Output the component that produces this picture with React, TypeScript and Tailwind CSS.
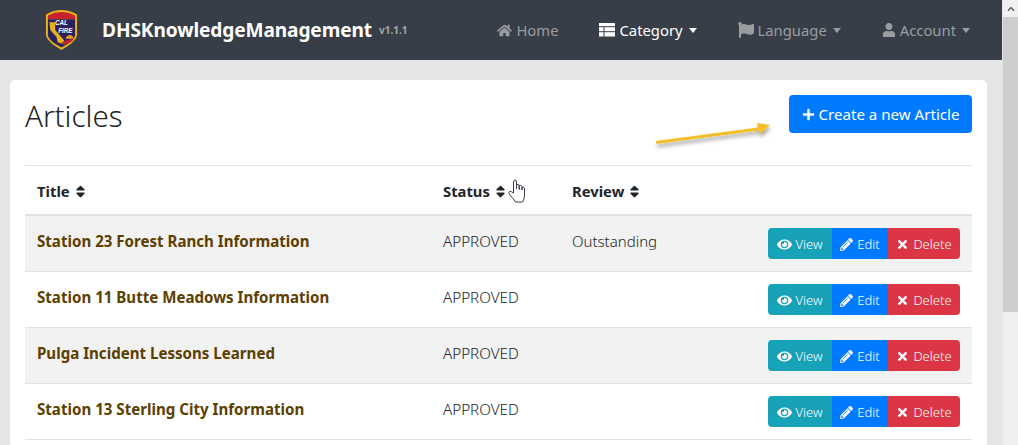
import { FaHome, FaFlag, FaUser, FaPlus, FaEye, FaPencilAlt, FaTimes, FaSort, FaChevronUp } from "react-icons/fa";

const rows = [
  { title: "Station 23 Forest Ranch Information", review: "Outstanding" },
  { title: "Station 11 Butte Meadows Information", review: "" },
  { title: "Pulga Incident Lessons Learned", review: "" },
  { title: "Station 13 Sterling City Information", review: "" },
];

function Logo() {
  return (
    <svg width="33" height="42" viewBox="0 0 34 42" className="shrink-0">
      <path d="M1 5 Q9 0.5 17 0.5 Q25 0.5 33 5 L33 27 Q31 34 17 41.5 Q3 34 1 27 Z" fill="#e8b21c" />
      <path d="M3 6 Q10 2.5 17 2.5 Q24 2.5 31 6 L31 10 L3 10 Z" fill="#c8232c" />
      <path d="M3 10 L31 10 L31 27 Q29 33 17 39 Q5 33 3 27 Z" fill="#2a2260" />
      <text x="17" y="16" fontSize="6.5" fontWeight="700" fontStyle="italic" fill="#fff" textAnchor="middle" fontFamily="Liberation Sans">CAL</text>
      <text x="21" y="24" fontSize="6.5" fontWeight="700" fontStyle="italic" fill="#fff" textAnchor="middle" fontFamily="Liberation Sans">FIRE</text>
      <path d="M4.5 13 L10.5 13 L10.5 21 L20 32 L18.5 35.5 L13 33.5 L12 28.5 L5.5 21 Z" fill="#e8b21c" />
      <path d="M21 30 A4.5 4.5 0 0 1 29 28 L29 30 Z" fill="#e8a01c" />
      <path d="M17 33.5 L29.5 29.5 L28 32.5 L19.5 36.5 Z" fill="#c8232c" />
    </svg>
  );
}

function TableIcon() {
  return (
    <svg width="16" height="14" viewBox="0 0 16 14" className="shrink-0" fill="#fff">
      <rect x="0" y="0" width="16" height="3.2" />
      <rect x="0" y="4.2" width="4.5" height="4" />
      <rect x="5.5" y="4.2" width="10.5" height="4" />
      <rect x="0" y="9.2" width="4.5" height="4.3" />
      <rect x="5.5" y="9.2" width="10.5" height="4.3" />
    </svg>
  );
}

function Caret({ light }: { light: boolean }) {
  return <span className={`ml-[2px] inline-block w-0 h-0 border-x-[4.5px] border-x-transparent border-t-[5px] ${light ? "border-t-white" : "border-t-[#9a9da0]"}`} />;
}

function NavItem({ icon, label, active, caret }: { icon: React.ReactNode; label: string; active?: boolean; caret?: boolean }) {
  return (
    <div className={`flex items-center gap-[4px] text-[14.8px] ${active ? "text-white" : "text-[#9a9da0]"}`}>
      {icon}
      <span>{label}</span>
      {caret && <Caret light={!!active} />}
    </div>
  );
}

function Th({ label, className }: { label: string; className: string }) {
  return (
    <div className={`flex items-center gap-[3px] pl-3 pt-[2px] font-bold text-[#212529] text-[14.8px] ${className}`}>
      <span>{label}</span>
      <FaSort className="text-[15px]" />
    </div>
  );
}

export default function App() {
  return (
    <div className="flex h-[445px] w-[1018px] overflow-hidden bg-[#e3e5e7] text-[#212529] font-['Noto_Sans','Open_Sans',sans-serif]">
      <div className="relative flex-1 min-w-0 flex flex-col">
        <header className="h-[60px] shrink-0 bg-[#383e47] flex items-center">
          <div className="ml-[45px] mr-[24px]"><Logo /></div>
          <span className="text-white font-bold text-[19.1px] tracking-[-0.1px]">DHSKnowledgeManagement</span>
          <span className="ml-[7px] mt-[1px] text-[10px] font-bold text-[#a4a7aa]">v1.1.1</span>
          <nav className="ml-auto flex items-center mr-[32px] gap-[41px]">
            <NavItem icon={<FaHome className="text-[15px]" />} label="Home" />
            <NavItem icon={<TableIcon />} label="Category" active caret />
            <NavItem icon={<FaFlag className="text-[16px]" />} label="Language" caret />
            <NavItem icon={<FaUser className="text-[14px]" />} label="Account" caret />
          </nav>
        </header>
        <main className="flex-1 min-h-0 pr-[15px] pl-[10px] pt-[20px]">
          <div className="bg-white rounded-t-[5px] h-full px-[15px] pt-[15px]">
            <div className="flex items-start justify-between h-[70px]">
              <h1 className="font-light text-[29.5px] leading-[42px] text-[#212529]">Articles</h1>
              <button className="h-[38px] w-[183px] rounded-[4px] bg-[#007bff] text-white text-[15.1px] flex items-center justify-center gap-[4px]">
                <FaPlus className="text-[13px]" />
                Create a new Article
              </button>
            </div>
            <div className="border-t border-[#dee2e6] flex items-center h-[48px] border-b-2 box-content">
              <Th label="Title" className="w-[406px]" />
              <Th label="Status" className="w-[129px]" />
              <Th label="Review" className="flex-1" />
            </div>
            {rows.map((r, i) => (
              <div key={r.title} className={`flex items-start h-[43px] pt-3 border-b border-[#dee2e6] box-content ${i % 2 === 0 ? "bg-[#f2f2f2]" : "bg-white"}`}>
                <div className="w-[406px] pl-3 font-bold text-[15.1px] leading-[27px] text-[#5c4000]">{r.title}</div>
                <div className="w-[129px] pl-3 font-light text-[15.2px] leading-[27px]">APPROVED</div>
                <div className="flex-1 pl-3 font-light text-[15px] leading-[27px]">{r.review}</div>
                <div className="mr-3 flex h-[31px] text-white text-[13px] font-light rounded-[4px] overflow-hidden">
                  <span className="w-[64px] bg-[#17a2b8] flex items-center justify-center gap-[3px] pt-[3px]"><FaEye className="text-[15px] -mt-[2px]" />View</span>
                  <span className="w-[56px] bg-[#007bff] flex items-center justify-center gap-[4px] pt-[3px]"><FaPencilAlt className="text-[13px] -mt-[2px]" />Edit</span>
                  <span className="w-[72px] bg-[#dc3545] flex items-center justify-center gap-[4px] pt-[3px]"><FaTimes className="text-[13px] -mt-[2px]" />Delete</span>
                </div>
              </div>
            ))}
          </div>
        </main>
        {/* annotation arrow */}
        <svg className="absolute left-[650px] top-[112px]" width="130" height="42" viewBox="0 0 130 42">
          <defs>
            <filter id="s" x="-20%" y="-50%" width="140%" height="220%">
              <feDropShadow dx="1" dy="3" stdDeviation="2" floodColor="#000" floodOpacity="0.4" />
            </filter>
          </defs>
          <path d="M6 29 L108 15.5 L107 11 L120 13 L110 22 L109 18.5 L6.5 32 Z" fill="#f4bd2a" filter="url(#s)" />
        </svg>
        {/* hand cursor */}
        <svg className="absolute left-[507px] top-[179px]" width="20" height="25" viewBox="0 0 20 25">
          <path d="M6.5 14 L6.5 3 Q6.5 1 8 1 Q9.5 1 9.5 3 L9.5 10 L9.5 6 Q11 4.8 12.2 6 L12.2 10.5 L12.2 7 Q13.7 5.8 15 7.2 L15 11 L15 8.5 Q16.8 7.5 17.5 9 L17.5 16 Q17.5 20 15.5 23 L8.5 23 Q6.5 20 2.5 15.5 Q1 13.5 2.5 12.5 Q4 12 6.5 14 Z" fill="#fff" stroke="#3a3a44" strokeWidth="1" strokeLinejoin="round" />
        </svg>
      </div>
      <div className="w-[16px] shrink-0 bg-[#f0f0f0] border-l border-[#e3e5e7] flex flex-col">
        <div className="h-[17px] flex items-center justify-center text-[#505050]"><FaChevronUp className="text-[8px]" /></div>
        <div className="h-[295px] bg-[#cdcdcd]" />
      </div>
    </div>
  );
}
